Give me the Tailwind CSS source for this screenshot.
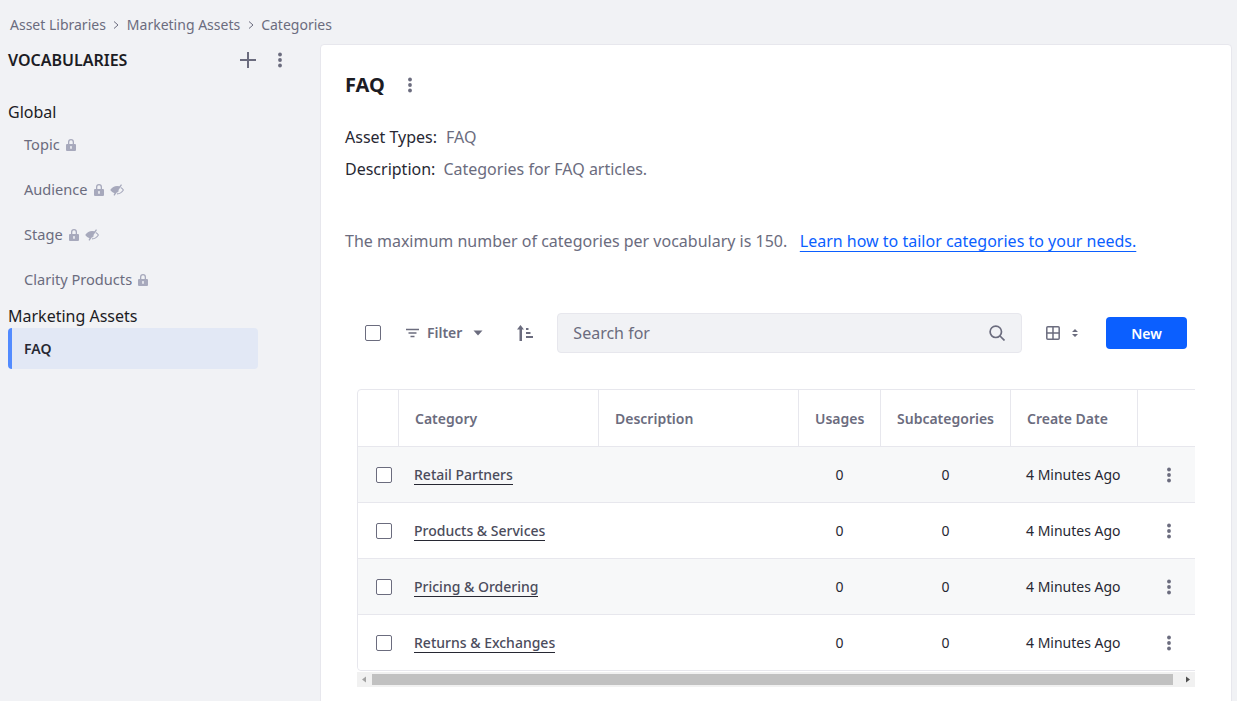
<!DOCTYPE html>
<html lang="en">
<head>
<meta charset="utf-8">
<script src="https://cdn.jsdelivr.net/npm/@tailwindcss/browser@4"></script>
</head>
<body class="w-[1237px] h-[701px] overflow-hidden bg-[#f1f2f5] font-['Noto_Sans',sans-serif] text-[#272833]">
<nav class="h-[44px] pl-[10px] pt-[6px] flex items-center gap-[6.5px] text-[14px] leading-[22px] text-[#6b6c7e]">
  <span>Asset Libraries</span>
  <svg class="w-[8px] h-[8px]" viewBox="0 0 8 8" fill="none" stroke="#6b6c7e" stroke-width="1"><path d="M2 .5 6 4 2 7.5"/></svg>
  <span>Marketing Assets</span>
  <svg class="w-[8px] h-[8px]" viewBox="0 0 8 8" fill="none" stroke="#6b6c7e" stroke-width="1"><path d="M2 .5 6 4 2 7.5"/></svg>
  <span>Categories</span>
</nav>
<div class="flex h-[657px]">
  <aside class="w-[320px] shrink-0 pl-[8px] pr-[62px]">
    <div class="h-[32px] flex items-center justify-between">
      <h2 class="text-[16px] font-semibold text-[#1c1c24]">VOCABULARIES</h2>
      <div class="flex items-center gap-[16px] -mr-[30px] w-[48px]">
        <svg class="w-[16px] h-[16px] shrink-0" viewBox="0 0 16 16" fill="none" stroke="#6b6c7e" stroke-width="2"><path d="M8 0v16M0 8h16"/></svg>
        <svg class="w-[16px] h-[16px] shrink-0" viewBox="0 0 16 16" fill="#6b6c7e"><circle cx="8" cy="2.5" r="1.9"/><circle cx="8" cy="8" r="1.9"/><circle cx="8" cy="13.5" r="1.9"/></svg>
      </div>
    </div>
    <div class="mt-[23px] h-[23px] leading-[26px] text-[16px] text-[#1c1c24]">Global</div>
    <ul class="text-[14.6px] text-[#6b6c7e]">
      <li class="h-[45px] pl-[16px] flex items-center gap-[6px]">Topic
        <svg class="w-[10px] h-[12px]" viewBox="0 0 10 12" fill="#a7a9bc"><path fill-rule="evenodd" d="M2 5V3a3 3 0 0 1 6 0v2h1a1 1 0 0 1 1 1v5a1 1 0 0 1-1 1H1a1 1 0 0 1-1-1V6a1 1 0 0 1 1-1h1Zm1.300 0h3.400V3a1.700 1.700 0 0 0-3.400 0v2ZM5 7a1 1 0 0 0-.6 1.800V10h1.200V8.800A1 1 0 0 0 5 7Z"/></svg>
      </li>
      <li class="h-[45px] pl-[16px] flex items-center gap-[6px]">Audience
        <svg class="w-[10px] h-[12px]" viewBox="0 0 10 12" fill="#a7a9bc"><path fill-rule="evenodd" d="M2 5V3a3 3 0 0 1 6 0v2h1a1 1 0 0 1 1 1v5a1 1 0 0 1-1 1H1a1 1 0 0 1-1-1V6a1 1 0 0 1 1-1h1Zm1.300 0h3.400V3a1.700 1.700 0 0 0-3.400 0v2ZM5 7a1 1 0 0 0-.6 1.800V10h1.200V8.800A1 1 0 0 0 5 7Z"/></svg>
        <svg class="w-[14px] h-[12px]" viewBox="0 0 14 12"><path fill="#a7a9bc" d="M.2 6Q3 2.200 7 2l2.500.2L11 .2l1 .8-7.500 10.800-1-.7 1-1.800Q2 8.500.2 6Z"/><path fill="none" stroke="#a7a9bc" stroke-width="1.100" d="M10.700 3.600Q12.500 4.600 13.400 6 11 9.800 7 9.900M8.500 6.500 7.200 8.200"/></svg>
      </li>
      <li class="h-[45px] pl-[16px] flex items-center gap-[6px]">Stage
        <svg class="w-[10px] h-[12px]" viewBox="0 0 10 12" fill="#a7a9bc"><path fill-rule="evenodd" d="M2 5V3a3 3 0 0 1 6 0v2h1a1 1 0 0 1 1 1v5a1 1 0 0 1-1 1H1a1 1 0 0 1-1-1V6a1 1 0 0 1 1-1h1Zm1.300 0h3.400V3a1.700 1.700 0 0 0-3.400 0v2ZM5 7a1 1 0 0 0-.6 1.800V10h1.200V8.800A1 1 0 0 0 5 7Z"/></svg>
        <svg class="w-[14px] h-[12px]" viewBox="0 0 14 12"><path fill="#a7a9bc" d="M.2 6Q3 2.200 7 2l2.500.2L11 .2l1 .8-7.500 10.800-1-.7 1-1.800Q2 8.500.2 6Z"/><path fill="none" stroke="#a7a9bc" stroke-width="1.100" d="M10.700 3.600Q12.500 4.600 13.400 6 11 9.800 7 9.900M8.500 6.500 7.200 8.200"/></svg>
      </li>
      <li class="h-[45px] pl-[16px] flex items-center gap-[6px]">Clarity Products
        <svg class="w-[10px] h-[12px]" viewBox="0 0 10 12" fill="#a7a9bc"><path fill-rule="evenodd" d="M2 5V3a3 3 0 0 1 6 0v2h1a1 1 0 0 1 1 1v5a1 1 0 0 1-1 1H1a1 1 0 0 1-1-1V6a1 1 0 0 1 1-1h1Zm1.300 0h3.400V3a1.700 1.700 0 0 0-3.400 0v2ZM5 7a1 1 0 0 0-.6 1.800V10h1.200V8.800A1 1 0 0 0 5 7Z"/></svg>
      </li>
    </ul>
    <div class="h-[26px] leading-[28px] text-[16px] text-[#1c1c24]">Marketing Assets</div>
    <div class="h-[41px] pl-[12px] flex items-center rounded-[4px] bg-[#e2e8f5] border-l-[4px] border-[#528bff] text-[14px] font-semibold text-[#272833]">FAQ</div>
  </aside>
  <main class="w-[912px] h-[680px] bg-white border border-[#e7e7ed] rounded-[4px] pl-[24px]">
    <div class="h-[80px] pt-[23px] flex items-start">
      <h1 class="text-[20px] leading-[34px] font-bold text-[#1c1c24]">FAQ</h1>
      <svg class="w-[16px] h-[16px] mt-[9px] ml-[17px]" viewBox="0 0 16 16" fill="#6b6c7e"><circle cx="8" cy="2.5" r="1.9"/><circle cx="8" cy="8" r="1.9"/><circle cx="8" cy="13.5" r="1.9"/></svg>
    </div>
    <p class="h-[32px] mt-[-4px] text-[16px] leading-[32px] text-[#272833]">Asset Types:<span class="ml-[9px] text-[#6b6c7e]">FAQ</span></p>
    <p class="h-[32px] text-[16px] leading-[32px] text-[#272833]">Description:<span class="ml-[8px] text-[#6b6c7e]">Categories for FAQ articles.</span></p>
    <p class="h-[24px] mt-[44px] text-[16px] leading-[24px] text-[#6b6c7e]">The maximum number of categories per vocabulary is 150.<a class="ml-[12.5px] text-[#0b5fff] underline decoration-[#0b5fff] decoration-1 underline-offset-[4px]">Learn how to tailor categories to your needs.</a></p>
    <div class="mt-[60px] h-[40px] w-[842px] pl-[20px] flex items-center">
      <span class="w-[16px] h-[16px] rounded-[2px] border border-[#6b6c7e] bg-white"></span>
      <svg class="w-[13px] h-[12px] ml-[25px]" viewBox="0 0 13 12" fill="none" stroke="#6b6c7e" stroke-width="1.500"><path d="M0 2.500h13M2.500 6h8M4.500 9.500h4"/></svg>
      <span class="ml-[8px] -mt-[2px] text-[14px] font-semibold text-[#6b6c7e]">Filter</span>
      <svg class="w-[10px] h-[6px] ml-[11px]" viewBox="0 0 10 6" fill="#6b6c7e"><path d="M.5.500h9L5 5.500Z"/></svg>
      <svg class="w-[16px] h-[16px] ml-[34px]" viewBox="0 0 16 16" fill="#6b6c7e"><path d="M3.500 0 7 4.500H5V16H2.500V4.500H0ZM9 3h2.500v2H9ZM9 7h4.500v2H9ZM9 11h7v2H9Z"/></svg>
      <div class="ml-[24px] w-[465px] h-[40px] flex items-center justify-between rounded-[4px] bg-[#f1f2f5] border border-[#e7e7ed] pl-[15px] pr-[16px] text-[16px] text-[#6b6c7e]">
        <span>Search for</span>
        <svg class="w-[16px] h-[16px]" viewBox="0 0 16 16" fill="none" stroke="#6b6c7e" stroke-width="1.700"><circle cx="6.800" cy="6.800" r="5.700"/><path d="m11 11 4.500 4.500"/></svg>
      </div>
      <svg class="w-[14px] h-[14px] ml-[24px]" viewBox="0 0 14 14" fill="none" stroke="#6b6c7e" stroke-width="1.500"><rect x=".8" y=".8" width="12.400" height="12.400" rx="1"/><path d="M7 .8v12.400M.8 7h12.400"/></svg>
      <svg class="w-[6px] h-[8px] ml-[12px]" viewBox="0 0 6 8" fill="#6b6c7e"><path d="M3 0l3 3H0ZM3 8 0 5h6Z"/></svg>
      <button class="ml-[28px] w-[81px] h-[32px] rounded-[4px] bg-[#0b5fff] text-white text-[14px] font-semibold">New</button>
    </div>
    <div class="mt-[36px] w-[838px] ml-[12px] h-[282px] overflow-hidden">
      <div class="w-[860px] h-[282px] border border-[#e7e7ed] rounded-[4px] text-[14px]">
        <div class="h-[57px] flex items-center border-b border-[#e7e7ed] font-semibold text-[#6b6c7e]">
          <div class="w-[41px] h-full border-r border-[#e7e7ed]"></div>
          <div class="w-[200px] h-full pl-[16px] pt-[1px] flex items-center border-r border-[#e7e7ed]">Category</div>
          <div class="w-[200px] h-full pl-[16px] pt-[1px] flex items-center border-r border-[#e7e7ed]">Description</div>
          <div class="w-[82px] h-full pl-[16px] pt-[1px] flex items-center border-r border-[#e7e7ed]">Usages</div>
          <div class="w-[130px] h-full pl-[16px] pt-[1px] flex items-center border-r border-[#e7e7ed]">Subcategories</div>
          <div class="w-[127px] h-full pl-[16px] pt-[1px] flex items-center border-r border-[#e7e7ed]">Create Date</div>
        </div>
        <div class="h-[56px] flex items-center border-b border-[#e7e7ed] bg-[#f7f8f9]">
          <div class="w-[41px] pl-[18px] shrink-0"><span class="block w-[16px] h-[16px] rounded-[2px] border border-[#6b6c7e] bg-white"></span></div>
          <div class="w-[399.5px] pl-[15px]"><a class="text-[#4b4c5c] font-medium border-b border-[#272833]">Retail Partners</a></div>
          <div class="w-[82px] text-center">0</div>
          <div class="w-[130px] text-center">0</div>
          <div class="w-[126.5px] pl-[15.5px]">4 Minutes Ago</div>
          <svg class="w-[16px] h-[16px] ml-[24px]" viewBox="0 0 16 16" fill="#6b6c7e"><circle cx="8" cy="2.500" r="1.900"/><circle cx="8" cy="8" r="1.900"/><circle cx="8" cy="13.500" r="1.900"/></svg>
        </div>
        <div class="h-[56px] flex items-center border-b border-[#e7e7ed] bg-white">
          <div class="w-[41px] pl-[18px] shrink-0"><span class="block w-[16px] h-[16px] rounded-[2px] border border-[#6b6c7e] bg-white"></span></div>
          <div class="w-[399.5px] pl-[15px]"><a class="text-[#4b4c5c] font-medium border-b border-[#272833]">Products &amp; Services</a></div>
          <div class="w-[82px] text-center">0</div>
          <div class="w-[130px] text-center">0</div>
          <div class="w-[126.5px] pl-[15.5px]">4 Minutes Ago</div>
          <svg class="w-[16px] h-[16px] ml-[24px]" viewBox="0 0 16 16" fill="#6b6c7e"><circle cx="8" cy="2.500" r="1.900"/><circle cx="8" cy="8" r="1.900"/><circle cx="8" cy="13.500" r="1.900"/></svg>
        </div>
        <div class="h-[56px] flex items-center border-b border-[#e7e7ed] bg-[#f7f8f9]">
          <div class="w-[41px] pl-[18px] shrink-0"><span class="block w-[16px] h-[16px] rounded-[2px] border border-[#6b6c7e] bg-white"></span></div>
          <div class="w-[399.5px] pl-[15px]"><a class="text-[#4b4c5c] font-medium border-b border-[#272833]">Pricing &amp; Ordering</a></div>
          <div class="w-[82px] text-center">0</div>
          <div class="w-[130px] text-center">0</div>
          <div class="w-[126.5px] pl-[15.5px]">4 Minutes Ago</div>
          <svg class="w-[16px] h-[16px] ml-[24px]" viewBox="0 0 16 16" fill="#6b6c7e"><circle cx="8" cy="2.500" r="1.900"/><circle cx="8" cy="8" r="1.900"/><circle cx="8" cy="13.500" r="1.900"/></svg>
        </div>
        <div class="h-[55px] flex items-center bg-white rounded-b-[4px]">
          <div class="w-[41px] pl-[18px] shrink-0"><span class="block w-[16px] h-[16px] rounded-[2px] border border-[#6b6c7e] bg-white"></span></div>
          <div class="w-[399.5px] pl-[15px]"><a class="text-[#4b4c5c] font-medium border-b border-[#272833]">Returns &amp; Exchanges</a></div>
          <div class="w-[82px] text-center">0</div>
          <div class="w-[130px] text-center">0</div>
          <div class="w-[126.5px] pl-[15.5px]">4 Minutes Ago</div>
          <svg class="w-[16px] h-[16px] ml-[24px]" viewBox="0 0 16 16" fill="#6b6c7e"><circle cx="8" cy="2.500" r="1.900"/><circle cx="8" cy="8" r="1.900"/><circle cx="8" cy="13.500" r="1.900"/></svg>
        </div>
      </div>
    </div>
    <div class="mt-[1px] ml-[12px] w-[838px] h-[15px] bg-[#f1f1f1] flex items-center">
      <svg class="w-[15px] h-[15px] shrink-0" viewBox="0 0 15 15" fill="#a3a3a3"><path d="M9 4.500v6l-4-3Z"/></svg>
      <div class="w-[801px] h-[11px] bg-[#c1c1c1]"></div>
      <div class="flex-1 flex justify-end"><svg class="w-[15px] h-[15px]" viewBox="0 0 15 15" fill="#505050"><path d="M6 4.500v6l4-3Z"/></svg></div>
    </div>
  </main>
</div>
</body>
</html>
